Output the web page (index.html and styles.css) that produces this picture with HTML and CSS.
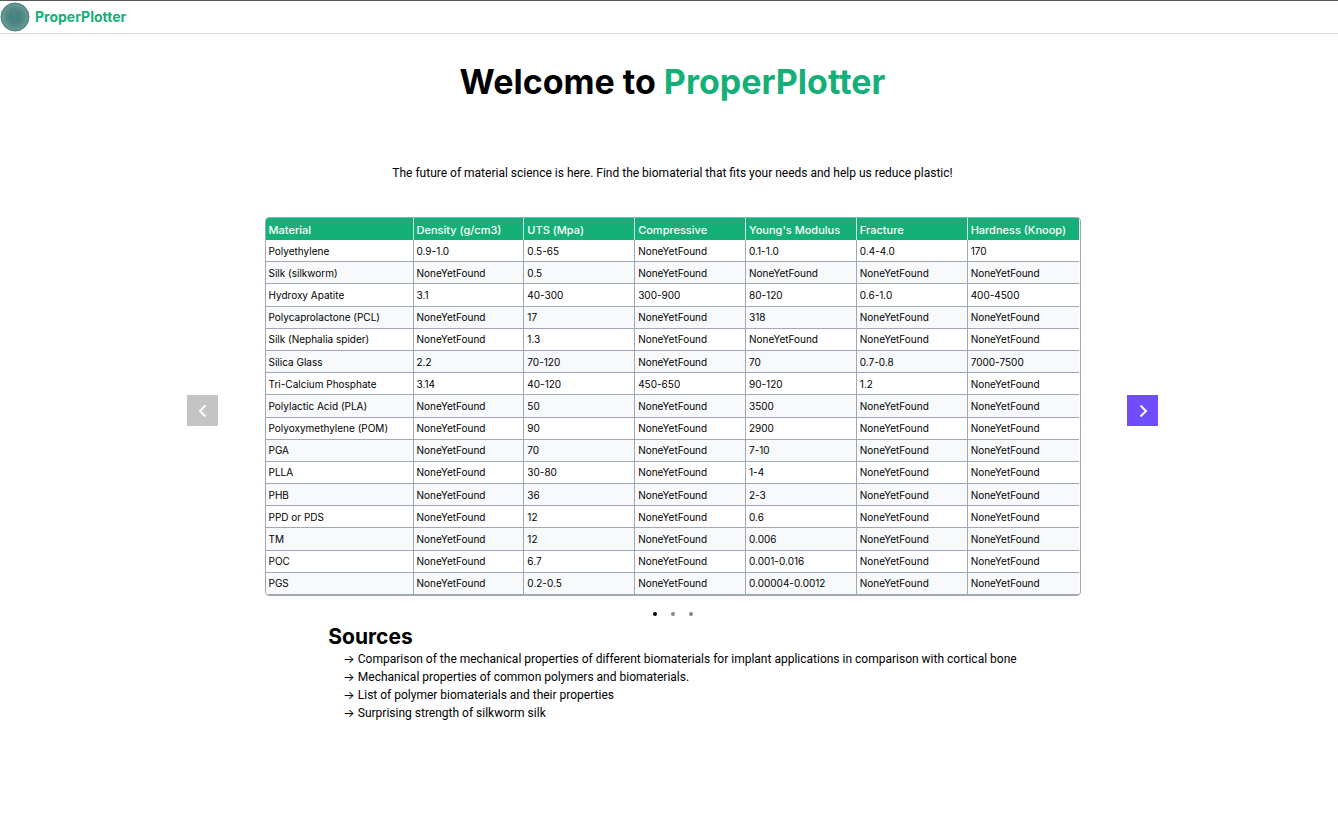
FILE: index.html
```html
<!DOCTYPE html>
<html lang="en">
<head>
<meta charset="utf-8">
<meta name="viewport" content="width=device-width, initial-scale=1">
<title>ProperPlotter</title>
<link rel="stylesheet" href="styles.css">
</head>
<body>
<header class="topbar">
  <a class="brand" href="#">
    <svg class="logo" viewBox="0 0 30 30" aria-hidden="true">
      <circle cx="15" cy="15" r="14" fill="#5f9490" stroke="#4f7d7b" stroke-width="1"/>
      <circle cx="15" cy="15" r="11" fill="#558a87" stroke="#659a95" stroke-width="1"/>
      <circle cx="15" cy="15" r="7" fill="#488582"/>
      <path d="M15 15 12 8.700A7 7 0 0 1 15 8Z" fill="#518b88"/>
    </svg>
    <span>ProperPlotter</span>
  </a>
</header>
<main class="page">
  <h1 class="title">Welcome to <span class="accent">ProperPlotter</span></h1>
  <p class="lead">The future of material science is here. Find the biomaterial that fits your needs and help us reduce plastic!</p>
  <section class="carousel" aria-label="Material tables">
    <button class="arrow" type="button" aria-label="Previous" disabled>
      <svg viewBox="0 0 12 16" aria-hidden="true"><path d="M8.500 2.500 3 8l5.500 5.500"/></svg>
    </button>
    <div class="table-frame">
      <table class="materials">
        <colgroup><col class="col-name"><col><col><col><col><col><col></colgroup>
        <thead>
          <tr><th>Material</th><th>Density (g/cm3)</th><th>UTS (Mpa)</th><th>Compressive</th><th>Young's Modulus</th><th>Fracture</th><th>Hardness (Knoop)</th></tr>
        </thead>
        <tbody>
          <tr><td>Polyethylene</td><td>0.9-1.0</td><td>0.5-65</td><td>NoneYetFound</td><td>0.1-1.0</td><td>0.4-4.0</td><td>170</td></tr>
          <tr><td>Silk (silkworm)</td><td>NoneYetFound</td><td>0.5</td><td>NoneYetFound</td><td>NoneYetFound</td><td>NoneYetFound</td><td>NoneYetFound</td></tr>
          <tr><td>Hydroxy Apatite</td><td>3.1</td><td>40-300</td><td>300-900</td><td>80-120</td><td>0.6-1.0</td><td>400-4500</td></tr>
          <tr><td>Polycaprolactone (PCL)</td><td>NoneYetFound</td><td>17</td><td>NoneYetFound</td><td>318</td><td>NoneYetFound</td><td>NoneYetFound</td></tr>
          <tr><td>Silk (Nephalia spider)</td><td>NoneYetFound</td><td>1.3</td><td>NoneYetFound</td><td>NoneYetFound</td><td>NoneYetFound</td><td>NoneYetFound</td></tr>
          <tr><td>Silica Glass</td><td>2.2</td><td>70-120</td><td>NoneYetFound</td><td>70</td><td>0.7-0.8</td><td>7000-7500</td></tr>
          <tr><td>Tri-Calcium Phosphate</td><td>3.14</td><td>40-120</td><td>450-650</td><td>90-120</td><td>1.2</td><td>NoneYetFound</td></tr>
          <tr><td>Polylactic Acid (PLA)</td><td>NoneYetFound</td><td>50</td><td>NoneYetFound</td><td>3500</td><td>NoneYetFound</td><td>NoneYetFound</td></tr>
          <tr><td>Polyoxymethylene (POM)</td><td>NoneYetFound</td><td>90</td><td>NoneYetFound</td><td>2900</td><td>NoneYetFound</td><td>NoneYetFound</td></tr>
          <tr><td>PGA</td><td>NoneYetFound</td><td>70</td><td>NoneYetFound</td><td>7-10</td><td>NoneYetFound</td><td>NoneYetFound</td></tr>
          <tr><td>PLLA</td><td>NoneYetFound</td><td>30-80</td><td>NoneYetFound</td><td>1-4</td><td>NoneYetFound</td><td>NoneYetFound</td></tr>
          <tr><td>PHB</td><td>NoneYetFound</td><td>36</td><td>NoneYetFound</td><td>2-3</td><td>NoneYetFound</td><td>NoneYetFound</td></tr>
          <tr><td>PPD or PDS</td><td>NoneYetFound</td><td>12</td><td>NoneYetFound</td><td>0.6</td><td>NoneYetFound</td><td>NoneYetFound</td></tr>
          <tr><td>TM</td><td>NoneYetFound</td><td>12</td><td>NoneYetFound</td><td>0.006</td><td>NoneYetFound</td><td>NoneYetFound</td></tr>
          <tr><td>POC</td><td>NoneYetFound</td><td>6.7</td><td>NoneYetFound</td><td>0.001-0.016</td><td>NoneYetFound</td><td>NoneYetFound</td></tr>
          <tr><td>PGS</td><td>NoneYetFound</td><td>0.2-0.5</td><td>NoneYetFound</td><td>0.00004-0.0012</td><td>NoneYetFound</td><td>NoneYetFound</td></tr>
        </tbody>
      </table>
    </div>
    <button class="arrow" type="button" aria-label="Next">
      <svg viewBox="0 0 12 16" aria-hidden="true"><path d="M3.500 2.500 9 8l-5.500 5.500"/></svg>
    </button>
  </section>
  <div class="dots">
    <button class="dot dot-active" type="button" aria-label="Slide 1"></button>
    <button class="dot" type="button" aria-label="Slide 2"></button>
    <button class="dot" type="button" aria-label="Slide 3"></button>
  </div>
  <section class="sources">
    <h2 class="sources-title">Sources</h2>
    <ul class="source-list">
      <li><a href="#">→ Comparison of the mechanical properties of different biomaterials for implant applications in comparison with cortical bone</a></li>
      <li><a href="#">→ Mechanical properties of common polymers and biomaterials.</a></li>
      <li><a href="#">→ List of polymer biomaterials and their properties</a></li>
      <li><a href="#">→ Surprising strength of silkworm silk</a></li>
    </ul>
  </section>
</main>
</body>
</html>
```
FILE: styles.css
```css
* { box-sizing: border-box; }

body {
  margin: 0;
  background: #fff;
  color: #000;
  font: 12px/18px Roboto, Inter, sans-serif;
}

a { color: inherit; text-decoration: none; }
button { border: 0; padding: 0; cursor: pointer; }

.topbar {
  display: flex;
  border-top: 1px solid #59595b;
  border-bottom: 1px solid #d6d6d8;
}

.brand {
  display: flex;
  align-items: center;
  gap: 5px;
  height: 32px;
  color: #14b077;
  font-family: Inter, sans-serif;
  font-size: 14px;
  font-weight: 700;
}

.logo { width: 30px; height: 30px; }

.page { padding-left: 7px; }

.title {
  margin: 0;
  padding-top: 26px;
  font-family: Inter, sans-serif;
  font-size: 34px;
  line-height: 44px;
  font-weight: 700;
  text-align: center;
}

.accent { color: #14b077; }

.lead {
  margin: 60px 0 35px;
  text-align: center;
}

.carousel {
  display: flex;
  align-items: center;
  justify-content: space-between;
  max-width: 971px;
  margin: 0 auto;
}

.arrow {
  display: flex;
  align-items: center;
  justify-content: center;
  width: 31px;
  height: 31px;
  margin-top: 8px;
  background: #704dff;
}

.arrow:disabled { background: #c4c4c4; cursor: default; }

.arrow svg {
  width: 12px;
  height: 16px;
  fill: none;
  stroke: #fff;
  stroke-width: 2;
}

.table-frame {
  flex: 0 1 816px;
  padding-right: 1px;
  border: 1px solid #a0a7b8;
  border-radius: 4px;
  overflow: hidden;
}

.materials {
  width: 100%;
  height: 377px;
  border-spacing: 0;
  table-layout: fixed;
  font-family: Inter, sans-serif;
}

.col-name { width: 148px; }

.materials th,
.materials td {
  padding: 0 3px;
  border-right: 1px solid #a0a7b8;
  border-bottom: 1px solid #a0a7b8;
  text-align: left;
  white-space: nowrap;
}

.materials th {
  height: 22px;
  padding-top: 2px;
  border-right-color: #d3eee4;
  border-bottom: 0;
  background: #14b077;
  color: #fff;
  font-size: 11px;
  line-height: 20px;
  font-weight: 500;
}

.materials td { font-size: 10px; line-height: 20px; }
.materials th:last-child,
.materials td:last-child { border-right: 0; }
.materials tbody tr:nth-child(even) { background: #f7f9fb; }

.dots {
  display: flex;
  justify-content: center;
  gap: 14px;
  padding: 16px 0 8px;
}

.dot {
  width: 4px;
  height: 4px;
  border-radius: 50%;
  background: #858585;
}

.dot-active { background: #000; }

.sources {
  width: fit-content;
  margin: 0 auto;
}

.sources-title {
  margin: 0;
  font-family: Inter, sans-serif;
  font-size: 21px;
  line-height: 26px;
  font-weight: 700;
}

.source-list {
  margin: 0;
  padding: 0 0 0 15px;
  list-style: none;
}
```
